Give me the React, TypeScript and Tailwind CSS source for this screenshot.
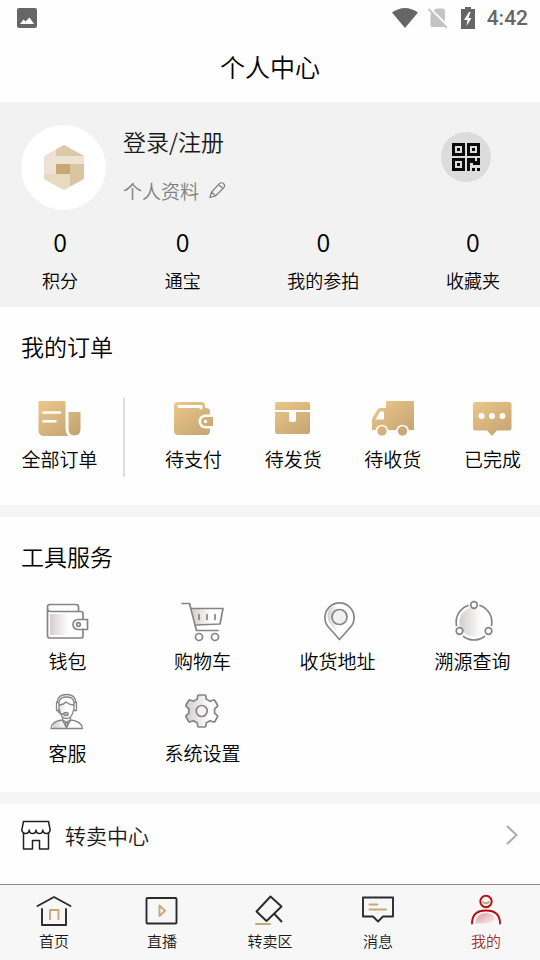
import type { ReactNode } from 'react';

type Item = {
    label: string;
    icon: ReactNode;
};

const stats = [
    { label: '积分', value: 0 },
    { label: '通宝', value: 0 },
    { label: '我的参拍', value: 0 },
    { label: '收藏夹', value: 0 },
];

// order icons share one gold gradient
const OrderIcon = ({ children }: { children: ReactNode }) => (
    <svg width="44" height="40" viewBox="0 -1 44 40" fill="url(#gold)" aria-hidden="true">
        {children}
    </svg>
);

const allOrders: Item = {
    label: '全部订单',
    icon: (
        <OrderIcon>
            <path d="M1.500 2H28.500V29Q28.500 34 31.500 37H7.500Q1.500 37 1.500 31Z" />
            <path d="M31.500 13H43.500V30Q43.500 36.500 37.500 36.500T31.500 30Z" />
            <path d="M6.500 13.500H23M6.500 22.200H18.500" stroke="#fff" strokeWidth="2.600" strokeLinecap="round" />
        </OrderIcon>
    ),
};

const orders: Item[] = [
    {
        label: '待支付',
        icon: (
            <OrderIcon>
                <path d="M6 3H29Q33 3 33 7V9H34Q38 9 38 13V32Q38 36 34 36H6Q2 36 2 32V7Q2 3 6 3Z" />
                <path d="M7 7.500H29V9" stroke="#fff" strokeWidth="3" strokeLinecap="round" fill="none" />
                <path d="M42 15.500H33.500A7 7 0 0 0 33.500 29.500H42Z" fill="#fff" />
                <path d="M41 18H33.500A4.500 4.500 0 0 0 33.500 27H41Z" />
                <circle cx="33.500" cy="22.500" r="1.700" fill="#fff" />
            </OrderIcon>
        ),
    },
    {
        label: '待发货',
        icon: (
            <OrderIcon>
                <path d="M6 3H37Q39 3 39 5V11H4V5Q4 3 6 3Z" />
                <path d="M4 13H18V21Q18 23 20 23H23Q25 23 25 21V13H39V33Q39 35 37 35H6Q4 35 4 33Z" />
            </OrderIcon>
        ),
    },
    {
        label: '待收货',
        icon: (
            <OrderIcon>
                <path d="M15 3Q15 2 16 2H42Q43 2 43 3V31H1V20L6.500 10.500Q7.500 9 9 9H15Z" />
                <path d="M4.500 20.500L9 12.500H13V20.500Z" fill="#fff" />
                <circle cx="11" cy="32" r="6.300" fill="#fff" />
                <circle cx="31.500" cy="32" r="6.300" fill="#fff" />
                <circle cx="11" cy="32" r="4.700" />
                <circle cx="31.500" cy="32" r="4.700" />
            </OrderIcon>
        ),
    },
    {
        label: '已完成',
        icon: (
            <OrderIcon>
                <path d="M5.500 3H39Q41.500 3 41.500 5.500V29Q41.500 31.500 39 31.500H27L22 37L17 31.500H5.500Q3 31.500 3 29V5.500Q3 3 5.500 3Z" />
                <g fill="#fff">
                    <circle cx="11.500" cy="17" r="3" />
                    <circle cx="22" cy="17" r="3" />
                    <circle cx="32.500" cy="17" r="3" />
                </g>
            </OrderIcon>
        ),
    },
];

const ToolIcon = ({ children }: { children: ReactNode }) => (
    <svg
        width="48"
        height="44"
        viewBox="0 0 48 44"
        fill="none"
        stroke="#858585"
        strokeWidth="1.700"
        strokeLinecap="round"
        strokeLinejoin="round"
        aria-hidden="true"
    >
        {children}
    </svg>
);

const tools: Item[] = [
    {
        label: '钱包',
        icon: (
            <ToolIcon>
                <path d="M6 15H30V36H6Z" fill="url(#shade)" stroke="none" />
                <path d="M39 30V37Q39 39 37 39H6Q3.500 39 3.500 36.500V8Q3.500 5.500 6 5.500H32Q34.500 5.500 34.500 8V12M3.500 9Q3.500 12.500 7 12.500H37Q39 12.500 39 14.500V20" />
                <path d="M43.500 20.500H34A5 5 0 0 0 34 30.500H43.500Z" />
                <circle cx="34.500" cy="25.500" r="1.800" />
            </ToolIcon>
        ),
    },
    {
        label: '购物车',
        icon: (
            <ToolIcon>
                <path d="M13 10H38V25H17Z" fill="url(#shade)" stroke="none" />
                <path d="M3 4.500H10.500L17.500 31.500H39M12.500 9.500H44L41 25L16.500 26M20 15.500V20.500M28 15.500V20.500M36 15.500V20.500" />
                <circle cx="20" cy="38" r="3.500" />
                <circle cx="36" cy="38" r="3.500" />
            </ToolIcon>
        ),
    },
    {
        label: '收货地址',
        icon: (
            <ToolIcon>
                <path d="M14 12Q19 4 28 7V32H22Q11 22 14 12Z" fill="url(#shade)" stroke="none" />
                <path d="M25.500 40.500L14 27.500A14.600 14.600 0 1 1 37 27.500Z" />
                <circle cx="25.500" cy="18" r="7.500" fill="#f1f0f0" />
            </ToolIcon>
        ),
    },
    {
        label: '溯源查询',
        icon: (
            <ToolIcon>
                <circle cx="25" cy="23" r="14.500" fill="url(#shade)" stroke="none" />
                <path d="M19 6.500A17.500 17.500 0 0 0 7.500 26.500M31 6.500A17.500 17.500 0 0 1 42.500 26.500M14.500 37.500A17.500 17.500 0 0 0 35.500 37.500" />
                <circle cx="25" cy="6" r="3.300" />
                <circle cx="10.500" cy="32" r="3.300" fill="#fefefe" />
                <circle cx="39.500" cy="32" r="3.300" fill="#fefefe" />
            </ToolIcon>
        ),
    },
    {
        label: '客服',
        icon: (
            <ToolIcon>
                <path d="M15 13H27V27H19Q15 23 15 13ZM9 37Q9 31 18 29L23 37Z" fill="url(#shade)" stroke="none" />
                <g strokeWidth="1.300">
                    <path d="M13 11Q14 3.500 22.500 3.500T32 11M15 11Q16 6 22.500 6T30 11M15.500 14Q20 13.500 22 11Q25 13.500 29.500 14" />
                    <path d="M15 11.500H12.500V19.500H15ZM30 11.500H32.500V19.500H30ZM15.500 19Q17 27.500 22.500 27.500T29.500 19M14 20Q15 23 20 23" />
                    <ellipse cx="22" cy="23" rx="2.200" ry="1.600" fill="#bbb" />
                    <path d="M18.500 26.500V29Q8 30 7 37.500H38.500Q37.500 30 26.500 29V26.500M18.500 29L22.500 37L26.500 29M19 29L22.500 31.500L26 29M21 32H24L22.500 37Z" />
                </g>
            </ToolIcon>
        ),
    },
    {
        label: '系统设置',
        icon: (
            <ToolIcon>
                <path
                    d="M19.500 4H26Q26.500 4 26.700 4.500L27.300 8.200Q29.500 9 31 10.300L34.700 9Q35.300 8.800 35.700 9.300L38.600 14.300Q38.800 15 38.400 15.400L35.500 18Q35.800 20 35.500 22L38.400 24.600Q38.800 25 38.600 25.700L35.700 30.700Q35.300 31.200 34.700 31L31 29.700Q29.500 31 27.300 31.800L26.700 35.500Q26.500 36 26 36H19.500Q19 36 18.800 35.500L18.200 31.800Q16 31 14.500 29.700L10.800 31Q10.200 31.200 9.800 30.700L6.900 25.700Q6.700 25 7.100 24.600L10 22Q9.700 20 10 18L7.100 15.400Q6.700 15 6.900 14.300L9.800 9.300Q10.200 8.800 10.800 9L14.500 10.300Q16 9 18.200 8.200L18.800 4.500Q19 4 19.500 4Z"
                    fill="url(#shade)"
                />
                <circle cx="22.700" cy="20" r="5.500" fill="#f4f4f4" />
            </ToolIcon>
        ),
    },
];

const TabIcon = ({ children }: { children: ReactNode }) => (
    <svg
        width="36"
        height="32"
        viewBox="0 0 36 32"
        fill="none"
        stroke="#2b2b2b"
        strokeWidth="1.900"
        strokeLinecap="round"
        strokeLinejoin="round"
        aria-hidden="true"
    >
        {children}
    </svg>
);

const tabs: Item[] = [
    {
        label: '首页',
        icon: (
            <TabIcon>
                <path d="M1.500 12L18 3L34.500 12M6 15V31H30V15" />
                <path d="M14 26V16H22.500V26" stroke="#c8a874" strokeLinecap="butt" />
            </TabIcon>
        ),
    },
    {
        label: '直播',
        icon: (
            <TabIcon>
                <rect x="2.500" y="4" width="30" height="25.500" rx="1" />
                <path d="M15.500 11.500V22L21 16.700Z" stroke="#c8a874" />
            </TabIcon>
        ),
    },
    {
        label: '转卖区',
        icon: (
            <TabIcon>
                <path d="M4.500 17.500L18.500 2.500L29.500 12.500L14.500 27ZM22.500 20L29.500 27.500" />
                <path d="M4 30H18" stroke="#c8a874" />
            </TabIcon>
        ),
    },
    {
        label: '消息',
        icon: (
            <TabIcon>
                <path d="M3 3.500H33V22.500H23L18 27.500L13 22.500H3Z" />
                <path d="M9.500 10.500H17.500M9.500 15.500H26" stroke="#c8a874" />
            </TabIcon>
        ),
    },
    {
        label: '我的',
        icon: (
            <TabIcon>
                <path d="M7.500 29.500Q8 19 18 19Q24 19 27.500 24.500Q22 29.500 17 29.500Z" fill="url(#rose)" stroke="none" />
                <circle cx="18" cy="7.500" r="5.700" stroke="#b30f14" />
                <path d="M15 8Q18 10.500 21 8" stroke="#c8a874" />
                <path d="M4 29.500Q4 16.500 18 16.500T32 29.500" stroke="#b30f14" />
            </TabIcon>
        ),
    },
];

const StatusBar = () => (
    <div className="flex h-9 items-center pr-3 pl-4 text-[#666]">
        <svg width="22" height="22" viewBox="0 0 22 22" aria-label="图片">
            <rect x="1" y="1" width="20" height="20" rx="2" fill="#666" />
            <path d="M4 17L7.500 12.500L9.500 14.500L13.500 10.500L18 17Z" fill="#fff" />
        </svg>
        <div className="ml-auto flex items-center">
            <svg width="28" height="22" viewBox="0 0 28 22" aria-hidden="true">
                <path d="M1 5.500Q14 -3.500 27 5.500L14 21Z" fill="#666" />
            </svg>
            <svg className="ml-2" width="22" height="22" viewBox="0 0 22 22" aria-hidden="true">
                <path d="M9 1.500H16Q18 1.500 18 3.500V20H5Q3.500 20 3.500 18.500V7Z" fill="#c4c4c4" />
                <path d="M2.500 1L21 19" stroke="#fff" strokeWidth="2" />
                <path d="M1.500 2L20 21" stroke="#c4c4c4" strokeWidth="1.800" />
            </svg>
            <svg className="ml-3" width="14" height="22" viewBox="0 0 14 22" aria-hidden="true">
                <path d="M4 0H10V2H14V22H0V2H4Z" fill="#666" />
                <path d="M8 5L3 13H6.500L5.500 19L10.500 11H7.500L9.500 5Z" fill="#fff" />
            </svg>
            <span className="ml-3 font-[Roboto,sans-serif] text-[21px] leading-none font-medium">4:42</span>
        </div>
    </div>
);

const QrIcon = () => (
    <svg width="28" height="28" viewBox="0 0 28 28" aria-hidden="true">
        <g fill="none" stroke="#0a0a0a" strokeWidth="3">
            <path d="M1.500 1.500H11.500V11.500H1.500ZM16.500 1.500H26.500V11.500H16.500ZM1.500 16.500H11.500V26.500H1.500Z" />
        </g>
        <path
            d="M5 5H8V8H5ZM20 5H23V8H20ZM5 20H8V23H5ZM15 15H23V18H25V15H28V22H21V20H18V28H15ZM20 25H23V28H20ZM25 25H28V28H25Z"
            fill="#0a0a0a"
        />
    </svg>
);

const App = () => {
    return (
        <div className="flex min-h-screen w-full flex-col bg-[#fefefe] font-['Noto_Sans_CJK_SC',sans-serif] font-[350] text-black">
            {/* shared gradients */}
            <svg className="absolute size-0" aria-hidden="true">
                <defs>
                    <linearGradient id="gold" gradientUnits="userSpaceOnUse" x1="8" y1="2" x2="34" y2="38">
                        <stop offset="0" stopColor="#e9c588" />
                        <stop offset="1" stopColor="#c5a573" />
                    </linearGradient>
                    <linearGradient id="shade">
                        <stop offset="0" stopColor="#d2cecd" />
                        <stop offset="0.75" stopColor="#fefefe" />
                    </linearGradient>
                    <linearGradient id="rose" x1="0" y1="0" x2="1" y2="1">
                        <stop offset="0" stopColor="#dc9a9b" />
                        <stop offset="1" stopColor="#f9f1f1" />
                    </linearGradient>
                </defs>
            </svg>

            <StatusBar />
            <header className="flex h-[66px] items-center justify-center pb-[6px]">
                <h1 className="text-[25px] leading-8 font-[350]">个人中心</h1>
            </header>

            <section className="bg-[#f2f2f2] pt-[23px] pb-[13px]">
                <div className="flex items-start pr-[49px] pl-[21px]">
                    <div className="flex size-[85px] items-center justify-center rounded-full bg-white">
                        <svg width="40" height="46" viewBox="0 0 40 46" aria-hidden="true">
                            <path d="M20 0L40 11V34L20 45L0 34V11Z" fill="#ede2d3" />
                            <path d="M20 0L40 11H12V4.500Z" fill="#dcc9a6" />
                            <path d="M26 19H40V34L26 41.500Z" fill="#dac5a0" />
                            <path d="M0 29H26V41.500L20 45L0 34Z" fill="#e8dac1" />
                            <path d="M12 19H26V29H12Z" fill="#c8a874" />
                        </svg>
                    </div>
                    <div className="ml-[17px] flex flex-col items-start gap-5">
                        <a href="#login" className="text-[23px] leading-8 text-[#1a1a1a]">登录/注册</a>
                        <a href="#profile" className="flex items-center gap-2 text-[19px] leading-7 text-[#808080]">
                            个人资料
                            <svg width="20" height="20" viewBox="0 0 20 20" fill="none" stroke="#808080" strokeWidth="1.200" aria-hidden="true">
                                <path d="M3 16.500L4.500 11L12.500 2.500Q14.500 1 16.500 2.500Q18.500 4.500 17 6.500L8.500 15ZM11.500 3.500L16 7.500M4.500 11L8.500 15" />
                            </svg>
                        </a>
                    </div>
                    <button
                        type="button"
                        aria-label="二维码"
                        className="mt-[7px] ml-auto flex size-[50px] items-center justify-center rounded-full bg-[#dcdcdc]"
                    >
                        <QrIcon />
                    </button>
                </div>
                <ul className="mt-[13px] flex justify-between pr-10 pl-[42px]">
                    {stats.map((stat) => (
                        <li key={stat.label} className="flex flex-col items-center">
                            <span className="text-[25px] leading-9">{stat.value}</span>
                            <span className="mt-[7px] text-[18px] leading-7">{stat.label}</span>
                        </li>
                    ))}
                </ul>
            </section>

            <section className="pt-[23px] pb-7">
                <h2 className="px-[21px] text-[23px] leading-8 font-[350]">我的订单</h2>
                <div className="mt-9 flex">
                    <div className="flex w-[125px] justify-center border-r-2 border-[#ddd] pr-1">
                        <a href="#orders" className="flex flex-col items-center">
                            {allOrders.icon}
                            <span className="mt-[7px] text-[19px] leading-7">{allOrders.label}</span>
                        </a>
                    </div>
                    <div className="mr-[19px] ml-10 flex flex-1 justify-between">
                        {orders.map((item) => (
                            <a key={item.label} href="#orders" className="flex flex-col items-center pb-1">
                                {item.icon}
                                <span className="mt-[7px] text-[19px] leading-7">{item.label}</span>
                            </a>
                        ))}
                    </div>
                </div>
            </section>

            <div className="h-3 bg-[#f5f5f5]" />

            <section className="pt-[23px] pb-[25px]">
                <h2 className="px-[21px] text-[23px] leading-8 font-[350]">工具服务</h2>
                <div className="mt-[27px] grid grid-cols-4 gap-y-4">
                    {tools.map((item) => (
                        <a key={item.label} href="#tools" className="flex flex-col items-center">
                            {item.icon}
                            <span className="mt-1 text-[19px] leading-7">{item.label}</span>
                        </a>
                    ))}
                </div>
            </section>

            <div className="h-3 bg-[#f5f5f5]" />

            <section className="flex-1 pb-4">
                <a href="#resale" className="flex h-[62px] items-center px-[21px] text-[#1a1a1a]">
                    <svg width="30" height="30" viewBox="0 0 30 30" fill="none" stroke="#222" strokeWidth="1.500" strokeLinejoin="round" aria-hidden="true">
                        <path d="M2.500 1.500H27.500L29.200 10Q28.500 13.500 25.500 13.500Q22 13.500 21.800 10Q21.500 13.500 18.400 13.500Q15.200 13.500 15 10Q14.800 13.500 11.600 13.500Q8.500 13.500 8.200 10Q8 13.500 4.500 13.500Q1.500 13.500 .8 10ZM2.500 13V29H11.500V20.500H18.500V29H27.500V13" />
                    </svg>
                    <span className="ml-[14px] text-[21px] leading-8">转卖中心</span>
                    <svg className="ml-auto" width="14" height="20" viewBox="0 0 14 20" fill="none" stroke="#aaa" strokeWidth="2" aria-hidden="true">
                        <path d="M2 1L11.500 10L2 19" />
                    </svg>
                </a>
            </section>

            <nav className="grid grid-cols-5 border-t border-[#8a8a8a] bg-[#f7f7f7] pt-[9px] pb-[7px]">
                {tabs.map((tab) => (
                    <a
                        key={tab.label}
                        href="#tab"
                        aria-current={tab.label === '我的' ? 'page' : undefined}
                        className="flex flex-col items-center text-[#1a1a1a] aria-[current=page]:text-[#a03030]"
                    >
                        {tab.icon}
                        <span className="mt-[3px] text-[15px] leading-6">{tab.label}</span>
                    </a>
                ))}
            </nav>
        </div>
    );
};

export default App;
